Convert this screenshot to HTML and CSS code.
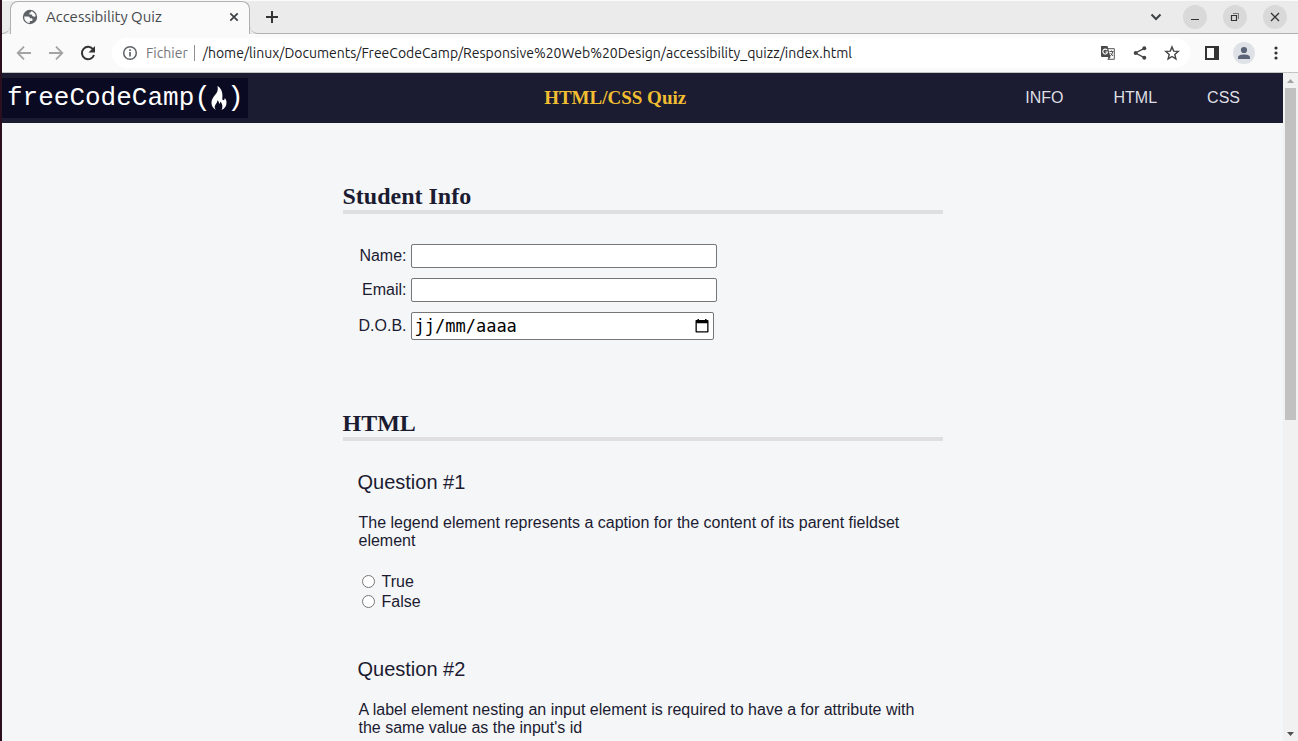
FILE: index.html
```html
<!DOCTYPE html>
<html lang="en">
<head>
<meta charset="utf-8">
<title>Accessibility Quiz</title>
<link rel="stylesheet" href="styles.css">
</head>
<body>
<div class="window">
  <div class="tabstrip">
    <div class="tab-edge"></div>
    <div class="tab">
      <svg class="favicon" width="16" height="16" viewBox="0 0 16 16"><circle cx="8" cy="8" r="7.2" fill="#5f6368"/><path d="M2.200 7.500h4c1.300 0 1.600.8 1.600 1.700h1.500c.9 0 1.300.7 1.300 1.500 0 .9-.7 1.300-1.600 1.300H7.800v1.900C4.500 13.900 2 11.200 2.200 7.500zM9 2.200c2.500.4 4.500 2.400 4.800 5-1 .6-2.300.6-3.300-.2-.5-.4-.7-.9-.7-1.500H7.600c-.5-1.300 0-2.200 1.400-2.200z" fill="#fafafa"/></svg>
      <span class="tab-title">Accessibility Quiz</span>
      <button class="icon-btn" aria-label="Close tab"><svg width="16" height="16" viewBox="0 0 16 16"><path d="M4.300 4.300l7.400 7.400M11.700 4.300l-7.400 7.400" stroke="#3c4043" stroke-width="1.700"/></svg></button>
    </div>
    <div class="strip-rest">
      <button class="icon-btn" aria-label="New tab"><svg width="16" height="16" viewBox="0 0 16 16"><path d="M8 2v12M2 8h12" stroke="#333" stroke-width="2"/></svg></button>
      <div class="window-controls">
        <button class="icon-btn" aria-label="Search tabs"><svg width="16" height="16" viewBox="0 0 16 16"><path d="M3.500 5.500L8 10l4.500-4.500" fill="none" stroke="#3c4043" stroke-width="2"/></svg></button>
        <button class="round-btn" aria-label="Minimize"><svg width="16" height="16" viewBox="0 0 16 16"><path d="M4 10.500h8" stroke="#333" stroke-width="1"/></svg></button>
        <button class="round-btn" aria-label="Restore"><svg width="16" height="16" viewBox="0 0 16 16" fill="none"><path d="M4.500 6.500h5v5h-5z" stroke="#333" stroke-width="1.200"/><path d="M6 4.500h5.500V10" stroke="#777"/></svg></button>
        <button class="round-btn" aria-label="Close"><svg width="16" height="16" viewBox="0 0 16 16"><path d="M4 4l8 8M12 4l-8 8" stroke="#333" stroke-width="1.300"/></svg></button>
      </div>
    </div>
  </div>

  <div class="toolbar">
    <button class="icon-btn" aria-label="Back"><svg width="16" height="16" viewBox="0 0 16 16"><path d="M15 8H2M8 1.700L1.700 8 8 14.300" fill="none" stroke="#a3a3a3" stroke-width="1.800"/></svg></button>
    <button class="icon-btn" aria-label="Forward"><svg width="16" height="16" viewBox="0 0 16 16"><path d="M1 8h13M8 1.700L14.300 8 8 14.300" fill="none" stroke="#a3a3a3" stroke-width="1.800"/></svg></button>
    <button class="icon-btn" aria-label="Reload"><svg width="16" height="16" viewBox="0 0 16 16"><path d="M13.200 4.500A6.200 6.200 0 1 0 14 10" fill="none" stroke="#333" stroke-width="2"/><path d="M15 1v6.500H8.500z" fill="#333"/></svg></button>
    <div class="address">
      <svg width="16" height="16" viewBox="0 0 16 16"><circle cx="8" cy="8" r="6.300" fill="none" stroke="#5f6368" stroke-width="1.500"/><path d="M8 7v4.500M8 4.300v1.700" stroke="#5f6368" stroke-width="1.700"/></svg>
      <span class="scheme">Fichier</span>
      <span class="url">/home/linux/Documents/FreeCodeCamp/Responsive%20Web%20Design/accessibility_quizz/index.html</span>
      <div class="address-icons">
        <button class="icon-btn" aria-label="Translate"><svg width="16" height="16" viewBox="0 0 16 16"><path d="M7 3.700h7.300v10.600H7.500" fill="#fff" stroke="#555"/><path d="M1 1h6.500l3 11H2a1 1 0 0 1-1-1zM8 12h2.500L8.500 15z" fill="#4a4a4a"/><path d="M7.300 5.300A2.400 2.400 0 1 0 7.600 7H5.400" fill="none" stroke="#fff" stroke-width="1.100"/><path d="M9.500 6.500h4M11.500 5.500v1M13 6.500c-.5 2-1.500 3.300-2.700 4.500M10.500 8l2.500 3" fill="none" stroke="#555"/></svg></button>
        <button class="icon-btn" aria-label="Share"><svg width="16" height="16" viewBox="0 0 16 16"><path d="M12.300 3.300L3.500 8l8.800 4.700" fill="none" stroke="#444" stroke-width="1.400"/><g fill="#444"><circle cx="12.300" cy="3.300" r="2"/><circle cx="3.700" cy="8" r="2"/><circle cx="12.300" cy="12.700" r="2"/></g></svg></button>
        <button class="icon-btn" aria-label="Bookmark"><svg width="16" height="16" viewBox="0 0 16 16"><path d="M8 1.900l1.700 4.200 4.600.3-3.500 3 1.100 4.500L8 11.500l-3.900 2.400 1.100-4.500-3.500-3 4.600-.3z" fill="none" stroke="#444" stroke-width="1.400"/></svg></button>
      </div>
    </div>
    <div class="tools">
      <button class="icon-btn" aria-label="Side panel"><svg width="16" height="16" viewBox="0 0 16 16"><path d="M1 1h14v14H1zM3 3v10h7V3z" fill="#333" fill-rule="evenodd"/></svg></button>
      <button class="avatar" aria-label="Profile"><svg width="14" height="14" viewBox="0 0 14 14" fill="#5a6378"><circle cx="7" cy="4" r="3.100"/><path d="M1 13v-1.500C1 9.300 4 8.500 7 8.500s6 .8 6 3V13z"/></svg></button>
      <button class="icon-btn" aria-label="Menu"><svg width="16" height="16" viewBox="0 0 16 16" fill="#333"><circle cx="8" cy="3" r="1.600"/><circle cx="8" cy="8" r="1.600"/><circle cx="8" cy="13" r="1.600"/></svg></button>
    </div>
  </div>

  <div class="viewport">
    <div class="page">
      <header class="site-header">
        <div class="logo"><span>freeCodeCamp</span><span class="paren">(</span><svg width="16" height="26" viewBox="0 0 16 26"><path d="M6.500 1c.8 4 0 6-2.500 9-2.300 2.700-3.500 5-3.500 8 0 3 1.500 5.300 4.500 7-1.400-1.700-1.700-3.200-.7-5 1-1.700 2.200-2.800 2-4.700 1.400.8 1.800 2 1.800 3.500.9-.5 1.300-1.400 1.200-2.400 2 2 3 5.500 1.200 8.600 3.400-1.500 5-4 5-7.500 0-1.800-.6-3.200-1.800-4.500 0 1.500-.5 2.200-1.300 2.200-1.300 0-1.200-1.600-1-3.200C11.800 6.500 9.900 3 6.500 1z" fill="#fff"/></svg><span class="paren">)</span></div>
        <h1 class="site-title">HTML/CSS Quiz</h1>
        <nav class="site-nav">
          <a href="#student-info">INFO</a>
          <a href="#html-questions">HTML</a>
          <a href="#css-questions">CSS</a>
        </nav>
      </header>
      <main>
        <form class="quiz">
          <section id="student-info">
            <h2>Student Info</h2>
            <div class="info">
              <div class="field"><label for="name">Name:</label><input class="text-input" id="name" type="text"></div>
              <div class="field"><label for="email">Email:</label><input class="text-input" id="email" type="email"></div>
              <div class="field"><label for="dob">D.O.B.</label>
                <div class="date-box"><input class="date-input" id="dob" type="text" value="jj/mm/aaaa"><button type="button" class="icon-btn" aria-label="Open calendar"><svg width="16" height="16" viewBox="0 0 16 16"><path d="M3.500 1H5v1h6V1h1.500v1H13.700a.8.8 0 0 1 .8.800v10.900a.8.800 0 0 1-.8.800H2.300a.8.800 0 0 1-.8-.8V2.800A.8.800 0 0 1 2.300 2h1.200zM2.800 5.200v8h10.400v-8z" fill="#000" fill-rule="evenodd"/></svg></button></div>
              </div>
            </div>
          </section>
          <section id="html-questions">
            <h2>HTML</h2>
            <div class="question">
              <h3>Question #1</h3>
              <p>The legend element represents a caption for the content of its parent fieldset element</p>
              <div class="answers">
                <label><input type="radio" name="q1" value="true">True</label>
                <label><input type="radio" name="q1" value="false">False</label>
              </div>
            </div>
            <div class="question">
              <h3>Question #2</h3>
              <p>A label element nesting an input element is required to have a for attribute with the same value as the input's id</p>
            </div>
          </section>
        </form>
      </main>
    </div>
    <div class="scrollbar">
      <svg width="15" height="15" viewBox="0 0 15 15"><path d="M4 10h7L7.500 6z" fill="#a3a3a3"/></svg>
      <div class="track"><div class="thumb"></div></div>
      <svg width="15" height="15" viewBox="0 0 15 15"><path d="M4 6h7l-3.500 4z" fill="#505050"/></svg>
    </div>
  </div>
</div>
</body>
</html>
```

FILE: styles.css
```css
* { box-sizing: border-box; }

body {
  margin: 0;
  overflow: hidden;
  font: 16px "Liberation Sans", Arial, sans-serif;
  color: #1b1b32;
}

h1, h2, h3, p { margin: 0; }

button {
  padding: 0;
  border: 0;
  background: none;
}

svg { display: block; flex: none; }

.window {
  display: flex;
  flex-direction: column;
  height: 100vh;
  border-left: 2px solid #2c0f1e;
  background: #fafafa;
}

/* Browser tabs */
.tabstrip {
  display: flex;
  height: 34px;
  background: #ebebeb;
  border-top: 1px solid #fafafa;
}

.tab-edge {
  width: 8px;
  border-bottom: 1px solid #b0b0b0;
  border-bottom-right-radius: 8px;
}

.tab {
  display: flex;
  align-items: center;
  gap: 8px;
  width: 240px;
  padding: 0 7px 2px 11px;
  background: #fafafa;
  border: 1px solid #b0b0b0;
  border-bottom: 0;
  border-radius: 8px 8px 0 0;
}

.tab-title {
  flex: 1;
  font: 15px/20px Ubuntu, "Noto Sans", sans-serif;
  color: #45484c;
  white-space: nowrap;
}

.strip-rest {
  flex: 1;
  display: flex;
  align-items: center;
  justify-content: space-between;
  padding: 0 11px 0 14px;
  border-bottom: 1px solid #b0b0b0;
  border-bottom-left-radius: 8px;
}

.window-controls {
  display: flex;
  align-items: center;
  gap: 16px;
}

.window-controls .icon-btn { margin-right: 3px; }

.round-btn, .avatar {
  display: grid;
  place-items: center;
  width: 24px;
  height: 24px;
  border-radius: 50%;
  background: #d9d9d9;
}

/* Browser toolbar */
.toolbar {
  display: flex;
  align-items: center;
  gap: 14px;
  height: 39px;
  padding: 0 14px;
  border-bottom: 1px solid #c4c4c4;
}

.toolbar > .icon-btn { margin-right: 2px; }

.address {
  flex: 1;
  display: flex;
  align-items: center;
  gap: 8px;
  height: 30px;
  padding: 0 10px;
  border-radius: 15px;
  background: #fff;
  font: 14px/20px Ubuntu, "Noto Sans", sans-serif;
  color: #202124;
  white-space: nowrap;
}

.scheme {
  padding-right: 6px;
  border-right: 1px solid #909090;
  line-height: 16px;
  color: #74777b;
}

.address-icons {
  display: flex;
  gap: 16px;
  margin-left: auto;
}

.tools {
  display: flex;
  align-items: center;
  gap: 13px;
}

.avatar { background: #dee1e6; }

.toolbar .avatar { width: 22px; height: 22px; }

/* Page and scrollbar */
.viewport {
  flex: 1;
  display: flex;
  min-height: 0;
}

.page {
  flex: 1;
  overflow: hidden;
  background: #f5f6f7;
}

.scrollbar {
  display: flex;
  flex-direction: column;
  width: 15px;
  background: #f1f1f1;
}

.track { flex: 1; padding: 0 2px; }

.thumb { height: 52%; background: #c1c1c1; }

.site-header {
  display: flex;
  align-items: center;
  justify-content: space-between;
  height: 50px;
  padding-right: 18px;
  background: #1b1b32;
}

.logo {
  display: flex;
  align-items: center;
  height: 40px;
  width: 246px;
  padding-left: 5px;
  background: #0a0a23;
  color: #fff;
  font: 26px/36px "Liberation Mono", monospace;
}

.paren { font-size: 28px; }

.site-title {
  font: bold 19px/22px "Liberation Serif", serif;
  color: #f1be32;
}

.site-nav {
  display: flex;
  padding-left: 18px;
}

.site-nav a {
  padding: 8px 25px;
  color: #dfdfe2;
  text-decoration: none;
}

/* Quiz form */
.quiz {
  max-width: 600px;
  margin: 0 auto;
  padding-top: 60px;
}

h2 {
  border-bottom: 4px solid #dfdfe2;
  font: bold 24px/27px "Liberation Serif", serif;
}

.info {
  display: flex;
  flex-direction: column;
  gap: 10px;
  padding: 30px 0 70px 15px;
}

.field {
  display: flex;
  align-items: center;
  gap: 4px;
}

.field label {
  width: 49px;
  text-align: right;
}

.text-input, .date-box {
  border: 1px solid #767676;
  border-radius: 2px;
  background: #fff;
}

.text-input {
  width: 306px;
  height: 24px;
}

.date-box {
  display: flex;
  align-items: center;
  width: 303px;
  height: 28px;
  padding: 0 3px;
}

.date-input {
  flex: 1;
  min-width: 0;
  padding: 0;
  border: 0;
  background: none;
  color: #000;
  font: 17px "DejaVu Sans Mono", monospace;
}

.question { padding: 30px 15px 16px; }

h3 { font: 20px/23px "Liberation Sans", Arial, sans-serif; }

.question p {
  padding: 20px 1px 22px;
  line-height: 18px;
}

.answers label {
  display: flex;
  align-items: center;
  gap: 7px;
  line-height: 20px;
}

.answers input {
  width: 13px;
  height: 13px;
  margin: 0 0 2px 4px;
}
```
